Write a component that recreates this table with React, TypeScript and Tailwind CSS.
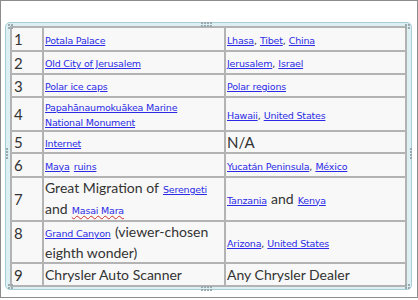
const big = "font-['Lato',sans-serif] text-[14px] text-[#333333]";
const lnk = "font-['DejaVu_Sans',sans-serif] text-[9.5px] tracking-[-0.2px] text-[#2b2be6] underline underline-offset-[1px]";
const sep = "font-['DejaVu_Sans',sans-serif] text-[9.5px] text-[#333333]";

const Dots = ({ cols, rows, className }: { cols: number; rows: number; className: string }) => (
  <div
    className={"absolute grid gap-[1px] " + className}
    style={{ gridTemplateColumns: `repeat(${cols}, 2px)` }}
  >
    {Array.from({ length: cols * rows }).map((_, i) => (
      <span key={i} className="block h-[2px] w-[2px] bg-[#9aa9ae]" />
    ))}
  </div>
);

const Row = ({ n, h, mid, right, numTop }: { n: string; h: string; mid: React.ReactNode; right: React.ReactNode; numTop?: boolean }) => (
  <tr className={h}>
    <td className={`border-2 border-[#b3b3b3] p-0 pl-[2px] leading-[16px] ${big} text-[15px] ${numTop ? "align-top pt-[3px]" : "align-middle"}`}>{n}</td>
    <td className="border-2 border-[#b3b3b3] p-0 pl-[1px] align-middle leading-[13px]">{mid}</td>
    <td className="border-2 border-[#b3b3b3] p-0 pl-[1px] align-middle leading-[16px]">{right}</td>
  </tr>
);

export default function App() {
  return (
    <div className="h-[300px] w-[418px] bg-white">
      <div className="h-[298px] w-[418px] border border-[#8c8c8c] pl-[4px] pt-[21px]">
        <div className="relative h-[268px] w-[407px] rounded-[5px] border border-[#a9cdd6] bg-[#dcf0f4] pb-[3px] pl-[4px] pr-[2px] pt-[3px]">
          <Dots cols={2} rows={2} className="left-[2px] top-[1px]" />
          <Dots cols={2} rows={2} className="right-[1px] top-[1px]" />
          <Dots cols={2} rows={2} className="bottom-[0px] left-[2px]" />
          <Dots cols={2} rows={2} className="bottom-[0px] right-[1px]" />
          <Dots cols={4} rows={2} className="left-[195px] top-[-1px]" />
          <Dots cols={4} rows={2} className="bottom-[-2px] left-[195px]" />
          <Dots cols={1} rows={4} className="left-[0px] top-[125px]" />
          <Dots cols={1} rows={4} className="right-[-1px] top-[125px]" />
          <table className="w-[397px] table-fixed border-collapse bg-[#f8f8f8]">
            <colgroup>
              <col className="w-[32px]" />
              <col className="w-[182px]" />
              <col />
            </colgroup>
            <tbody>
              <Row n="1" h="h-[24px]" mid={<span className={lnk}>Potala Palace</span>} right={<span><span className={lnk}>Lhasa</span><span className={sep}>, </span><span className={lnk}>Tibet</span><span className={sep}>, </span><span className={lnk}>China</span></span>} />
              <Row n="2" h="h-[23px]" mid={<span className={lnk}>Old City of Jerusalem</span>} right={<span><span className={lnk}>Jerusalem</span><span className={sep}>, </span><span className={lnk}>Israel</span></span>} />
              <Row n="3" h="h-[23px]" mid={<span className={lnk}>Polar ice caps</span>} right={<span className={lnk}>Polar regions</span>} />
              <Row n="4" h="h-[34px]" mid={<span className={lnk}>Papahānaumokuākea Marine<br />National Monument</span>} right={<span><span className={lnk}>Hawaii</span><span className={sep}>, </span><span className={lnk}>United States</span></span>} />
              <Row n="5" h="h-[22px]" mid={<span className={lnk}>Internet</span>} right={<span className={big + " text-[15px]"}>N/A</span>} />
              <Row n="6" h="h-[24px]" mid={<span><span className={lnk}>Maya</span> <span className={lnk}>ruins</span></span>} right={<span><span className={lnk}>Yucatán Peninsula</span><span className={sep}>, </span><span className={lnk}>México</span></span>} />
              <Row
                n="7"
                h="h-[41px]"
                mid={
                  <div className="leading-[18px]">
                    <span className={big}>Great Migration of</span> <span className={lnk}>Serengeti</span>
                    <br />
                    <span className={big}>and</span> <span className={lnk + " decoration-wavy decoration-[#d0302a]"}>Masai Mara</span>
                  </div>
                }
                right={<span><span className={lnk}>Tanzania</span> <span className={big}>and</span> <span className={lnk}>Kenya</span></span>}
              />
              <Row
                n="8"
                h="h-[42px]"
                numTop
                mid={
                  <div className="leading-[18px]">
                    <span className={lnk}>Grand Canyon</span> <span className={big}>(viewer-chosen eighth wonder)</span>
                  </div>
                }
                right={<span><span className={lnk}>Arizona</span><span className={sep}>, </span><span className={lnk}>United States</span></span>}
              />
              <Row n="9" h="h-[23px]" mid={<span className={big}>Chrysler Auto Scanner</span>} right={<span className={big}>Any Chrysler Dealer</span>} />
            </tbody>
          </table>
        </div>
      </div>
    </div>
  );
}
